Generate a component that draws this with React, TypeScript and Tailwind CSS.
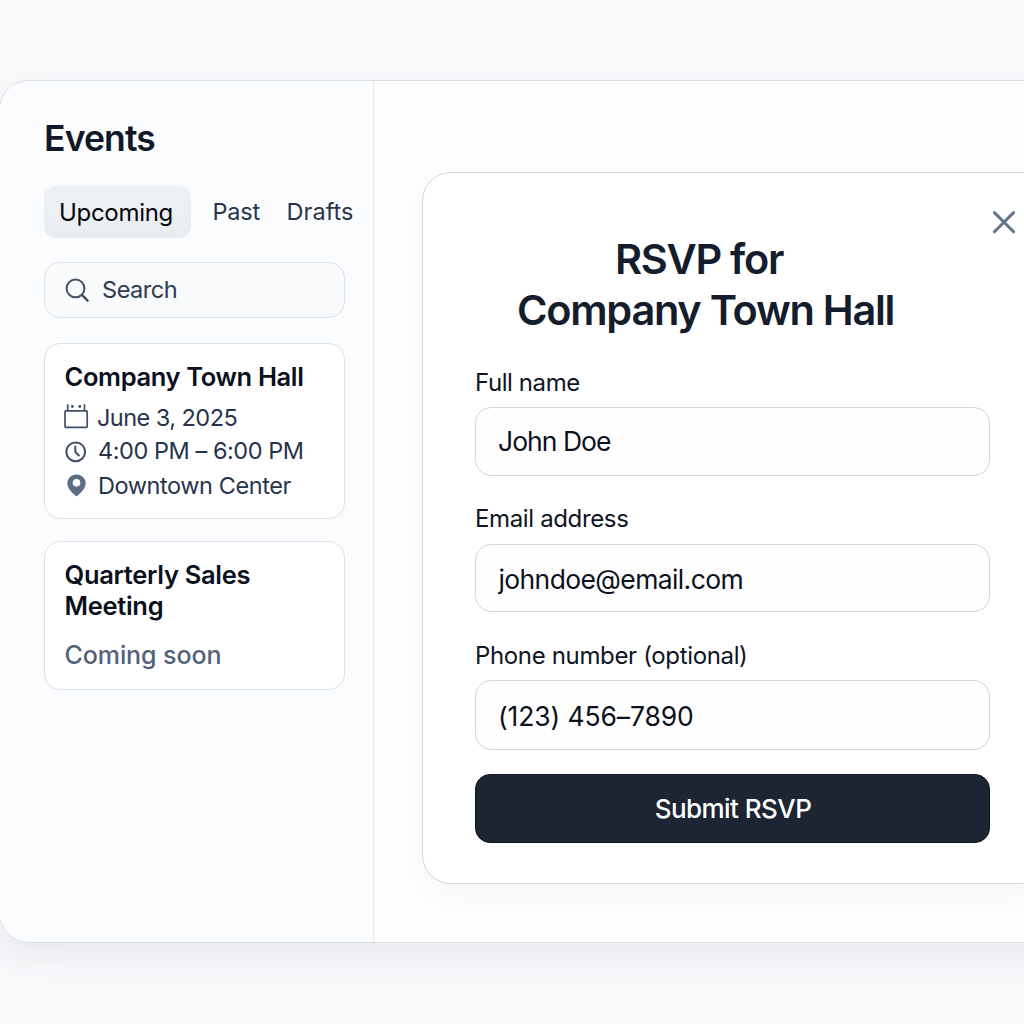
import React from "react";

type FieldProps = {
  label: string;
  value: string;
  labelClass: string;
  boxClass: string;
  textClass: string;
};

function Field({ label, value, labelClass, boxClass, textClass }: FieldProps) {
  return (
    <div className="flex flex-col">
      <label className={`text-[24px] leading-[32px] whitespace-nowrap text-[#0f1524] ${labelClass}`}>{label}</label>
      <div className={`flex w-[515px] items-center rounded-[16px] border border-[#cfd8e1] bg-[#fefefe] ${boxClass}`}>
        <span className={`text-[26.5px] leading-[34px] whitespace-nowrap text-[#0c1120] ${textClass}`}>{value}</span>
      </div>
    </div>
  );
}

function SearchIcon() {
  return (
    <svg className="size-[26px] shrink-0" viewBox="64 277 26 26" fill="none" stroke="#43526a" strokeLinecap="round">
      <circle cx="75.5" cy="288.4" r="8.9" strokeWidth="2" />
      <path d="M82.2 295.1 87.6 300.6" strokeWidth="2.5" />
    </svg>
  );
}

function CalendarIcon() {
  return (
    <svg className="h-[34px] w-[26px] shrink-0" viewBox="64 400 26 34" fill="none" stroke="#3f5068" strokeWidth="1.7">
      <rect x="65" y="410.9" width="22.2" height="16.4" rx="0.8" />
      <path d="M67.7 404.2v6.4M84.5 404.2v6.4" />
      <circle cx="72.4" cy="406.5" r="1.4" fill="#3f5068" stroke="none" />
      <circle cx="79.8" cy="406.5" r="1.4" fill="#3f5068" stroke="none" />
    </svg>
  );
}

function ClockIcon() {
  return (
    <svg className="h-[34px] w-[26px] shrink-0" viewBox="64 434 26 34" fill="none" stroke="#3f5068" strokeWidth="2" strokeLinecap="round" strokeLinejoin="round">
      <circle cx="75.7" cy="451.8" r="9.4" />
      <path d="M75.3 446.4v5.6l3.6 3.4" />
    </svg>
  );
}

function PinIcon() {
  return (
    <svg className="h-[34px] w-[26px] shrink-0" viewBox="64 468 26 34">
      <path
        fill="#5d6d84"
        fillRule="evenodd"
        d="M76.5 474.4c-5.2 0-9.2 4-9.2 8.9 0 5 4.4 8.9 8 12.3q1.2 1.1 2.4 0c3.6-3.4 8-7.3 8-12.3 0-4.9-4-8.9-9.2-8.9Zm0 4.5a3.8 3.8 0 1 1 0 7.6 3.8 3.8 0 0 1 0-7.6Z"
      />
    </svg>
  );
}

function Sidebar() {
  return (
    <aside className="flex w-[374px] shrink-0 flex-col rounded-l-[29px] border-r border-[#e3e7ec] bg-[#fbfcfd] pt-[36px] pl-[44px]">
      <h1 className="text-[35.5px] leading-[44px] font-semibold tracking-[-0.85px] text-[#111827]">Events</h1>
      <nav className="mt-[25px] flex h-[52px] items-center text-[23.5px] leading-[32px] whitespace-nowrap text-[#27344d]">
        <div className="flex h-[52px] w-[147px] shrink-0 items-center rounded-[12px] bg-gradient-to-b from-[#eef1f4] to-[#e9edf1] pt-[2px] pl-[15px] text-[24px] tracking-[-0.3px] text-[#05070d]">
          Upcoming
        </div>
        <div className="ml-[21.5px] w-[74px] shrink-0 pb-px tracking-[-0.2px]">Past</div>
        <div className="pb-px tracking-[0.05px]">Drafts</div>
      </nav>
      <div className="mt-[24px] flex h-[56px] w-[301px] items-center rounded-[16px] border border-[#dce2e9] bg-[#f9fafc] pl-[19px]">
        <SearchIcon />
        <span className="ml-[12px] text-[23.5px] leading-[32px] tracking-[-0.45px] text-[#2d3a52]">Search</span>
      </div>
      <section className="mt-[25px] flex h-[176px] w-[301px] flex-col rounded-[16px] border border-[#dbe2e9] bg-white pt-[17px] pl-[19px] text-[23.5px] leading-[34px] whitespace-nowrap text-[#27344d]">
        <h2 className="pl-[0.5px] text-[25.5px] leading-[32px] font-semibold tracking-[-0.36px] text-[#0b101d]">Company Town Hall</h2>
        <div className="mt-[7px] flex h-[34px]">
          <CalendarIcon />
          <span className="ml-[7px] pt-px tracking-[-0.54px]">June 3, 2025</span>
        </div>
        <div className="flex h-[34px]">
          <ClockIcon />
          <span className="ml-[8px] tracking-[-0.45px]">4:00 PM – 6:00 PM</span>
        </div>
        <div className="flex h-[34px]">
          <PinIcon />
          <span className="ml-[8px] pt-px tracking-[-0.43px]">Downtown Center</span>
        </div>
      </section>
      <section className="mt-[22px] flex h-[149px] w-[301px] flex-col rounded-[16px] border border-[#dbe2e9] bg-white pt-[17px] pl-[19.5px]">
        <h2 className="text-[25.5px] leading-[31px] font-semibold tracking-[-0.3px] text-[#0b101d]">
          Quarterly Sales
          <br />
          Meeting
        </h2>
        <p className="mt-[18px] text-[25px] leading-[32px] font-medium tracking-[-0.08px] text-[#52627a]">Coming soon</p>
      </section>
    </aside>
  );
}

function RsvpDialog() {
  return (
    <div className="relative mt-[91px] ml-[48px] flex h-[712px] w-[627px] shrink-0 flex-col rounded-[29px] border border-[#cdd7e1] bg-white pt-[61px] pl-[52px] shadow-[0_12px_40px_rgba(15,23,42,0.045)]">
      <button aria-label="Close" className="absolute top-[36px] left-[568px]">
        <svg className="size-[26px]" viewBox="0 0 26 26" fill="none" stroke="#64758b" strokeWidth="3" strokeLinecap="round">
          <path d="M3.4 3.6 22.6 22.8M22.6 3.6 3.4 22.8" />
        </svg>
      </button>
      <h2 className="text-[41.5px] leading-[51px] font-semibold tracking-[-1.28px] whitespace-nowrap text-[#151d2c]">
        <span className="block pl-[140px]">RSVP for</span>
        <span className="block pl-[42px]">Company Town Hall</span>
      </h2>
      <div className="mt-[31px] flex flex-col gap-[27px]">
        <Field label="Full name" value="John Doe" labelClass="tracking-[-0.42px]" boxClass="mt-[8px] h-[69px] pb-[2px]" textClass="ml-[22px] tracking-[-0.97px]" />
        <Field label="Email address" value="johndoe@email.com" labelClass="tracking-[-0.36px]" boxClass="mt-[9px] h-[68px] pt-px" textClass="ml-[22.5px] tracking-[-0.62px]" />
        <Field label="Phone number (optional)" value="(123) 456–7890" labelClass="pt-px tracking-[-0.35px]" boxClass="mt-[8px] h-[70px] pt-px" textClass="ml-[22px] tracking-[-0.11px]" />
      </div>
      <button className="mt-[24px] h-[69px] w-[515px] rounded-[15px] border border-[#0e1422] bg-[#1d2432] pl-px text-[26px] leading-[34px] font-medium tracking-[-0.55px] text-white">
        Submit RSVP
      </button>
    </div>
  );
}

export default function App() {
  return (
    <main className="h-[1024px] w-[1024px] overflow-hidden bg-[#f9fafc] pt-[80px] font-['Inter',sans-serif]">
      <div className="-ml-px flex h-[863px] w-[1120px] rounded-[30px] border border-[#d9dfe6] bg-[#fefefe] shadow-[0_14px_40px_rgba(30,41,59,0.09)]">
        <Sidebar />
        <RsvpDialog />
      </div>
    </main>
  );
}
